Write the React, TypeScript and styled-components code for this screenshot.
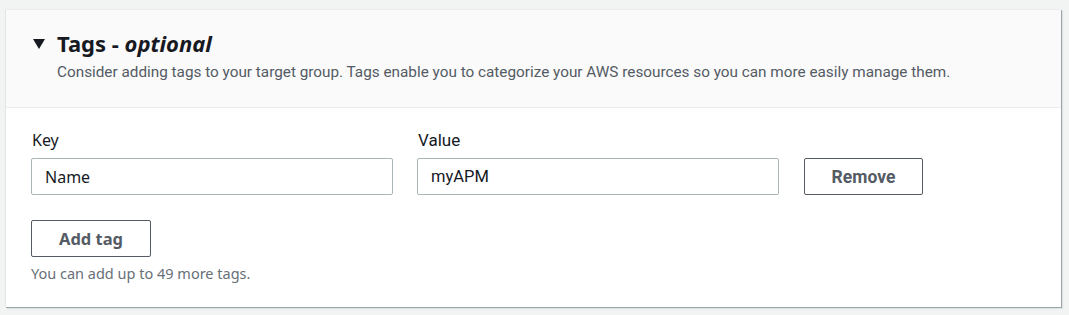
import React from 'react'
import styled, { createGlobalStyle } from 'styled-components'

const GlobalStyle = createGlobalStyle`
  html, body {
    margin: 0;
    padding: 0;
    background: #f2f3f3;
  }
  * {
    box-sizing: border-box;
  }
`

const wide = `'Noto Sans', 'Open Sans', sans-serif`
const narrow = `Roboto, 'Liberation Sans', sans-serif`

type Tag = { key: string; value: string }

const tags: Tag[] = [{ key: 'Name', value: 'myAPM' }]

const App = () => {
  return <Page>
    <GlobalStyle />
    <Card>
      <CardHeader>
        <TitleRow>
          <Caret viewBox="0 0 12 10" aria-hidden>
            <path d="M0 0 H12 L6 10 Z" fill="#16191f" />
          </Caret>
          <Title>Tags - <em>optional</em></Title>
        </TitleRow>
        <Description>
          Consider adding tags to your target group. Tags enable you to categorize your AWS resources so you can more easily manage them.
        </Description>
      </CardHeader>

      <CardBody>
        {tags.map((tag) => (
          <TagRow key={tag.key}>
            <Field>
              <FieldLabel narrow={false}>Key</FieldLabel>
              <TextInput narrow={false} defaultValue={tag.key} />
            </Field>
            <Field>
              <FieldLabel narrow>Value</FieldLabel>
              <TextInput narrow defaultValue={tag.value} />
            </Field>
            <Button narrow width={119}>Remove</Button>
          </TagRow>
        ))}

        <Button narrow={false} width={120}>Add tag</Button>
        <Hint>You can add up to 49 more tags.</Hint>
      </CardBody>
    </Card>
  </Page>
}

export default App

const Page = styled.div`
  padding: 9px 8px 7px 5px;
`

const Card = styled.section`
  background: #ffffff;
  border-top: 1px solid #eaeded;
  border-left: 1px solid #e1e5e5;
  box-shadow: 1px 1px 0 rgba(0, 28, 36, 0.3), 2px 2px 1px rgba(0, 28, 36, 0.08);
  color: #16191f;
`

const CardHeader = styled.div`
  background: #fafafa;
  border-bottom: 1px solid #eaeded;
  padding: 18px 20px 25px 27px;
`

const TitleRow = styled.div`
  display: flex;
  align-items: center;
  gap: 12px;
  height: 30px;
`

const Caret = styled.svg`
  width: 12px;
  height: 10px;
  flex: none;
  margin-top: 1px;
`

const Title = styled.h2`
  margin: 0;
  font-family: ${wide};
  font-size: 22px;
  font-weight: 700;
  line-height: 30px;

  em {
    font-style: italic;
  }
`

const Description = styled.p`
  margin: 4px 0 0 24px;
  font-family: ${narrow};
  font-size: 15.3px;
  line-height: 20px;
  color: #545b64;
`

const CardBody = styled.div`
  display: flex;
  flex-direction: column;
  align-items: flex-start;
  padding: 21px 25px 0 25px;
  height: 199px;
`

const TagRow = styled.div`
  display: flex;
  align-items: flex-end;
  gap: 24px;
  margin-bottom: 25px;
`

const Field = styled.label`
  display: flex;
  flex-direction: column;
  gap: 7px;
  width: 362px;
`

const FieldLabel = styled.span<{ narrow: boolean }>`
  font-family: ${(p) => (p.narrow ? narrow : wide)};
  font-size: ${(p) => (p.narrow ? '17px' : '16px')};
  line-height: 22px;
  color: #16191f;
  padding-left: 1px;
`

const TextInput = styled.input<{ narrow: boolean }>`
  height: 37px;
  width: 100%;
  padding: 0 13px;
  border: 1px solid #aab7b8;
  border-radius: 2px;
  background: #ffffff;
  font-family: ${(p) => (p.narrow ? narrow : wide)};
  font-size: ${(p) => (p.narrow ? '16.5px' : '16px')};
  color: #16191f;
  outline: none;
`

const Button = styled.button<{ narrow: boolean; width: number }>`
  height: 37px;
  width: ${(p) => p.width}px;
  margin-left: ${(p) => (p.narrow ? '1px' : '0')};
  background: #ffffff;
  border: 1px solid #545b64;
  border-radius: 2px;
  font-family: ${(p) => (p.narrow ? narrow : wide)};
  font-size: ${(p) => (p.narrow ? '17.5px' : '16.5px')};
  font-weight: 700;
  color: #545b64;
  cursor: pointer;
`

const Hint = styled.span`
  margin-top: 6px;
  font-family: ${wide};
  font-size: 14.5px;
  line-height: 20px;
  color: #687078;
`
